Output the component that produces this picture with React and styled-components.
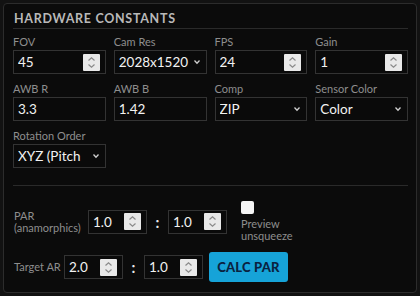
import React from 'react';
import styled, { createGlobalStyle } from 'styled-components';

const GlobalStyle = createGlobalStyle`
  html, body {
    margin: 0;
    padding: 0;
    background: #121212;
    font-family: Lato, "Open Sans", sans-serif;
  }
`;

const Panel = styled.div`
  box-sizing: border-box;
  margin: 3px;
  width: 414px;
  height: 290px;
  background: #0b0b0b;
  border: 1px solid #2c2c2c;
  border-radius: 4px;
  padding: 8px 8px 0 9px;
`;

const Heading = styled.div`
  font-size: 12.5px;
  line-height: 14px;
  font-weight: 700;
  letter-spacing: 0.7px;
  color: #b9b9b9;
  padding: 0 0 2px 1px;
  border-bottom: 1px solid #2a2a2a;
`;

const Grid = styled.div`
  display: grid;
  grid-template-columns: repeat(4, 1fr);
  column-gap: 8px;
  row-gap: 8px;
  margin-top: 6px;
`;

const Field = styled.div`
  display: flex;
  flex-direction: column;
  gap: 1px;
`;

const Label = styled.div`
  font-size: 11px;
  line-height: 14px;
  color: #8e8e8e;
  white-space: nowrap;
`;

const Box = styled.div`
  box-sizing: border-box;
  display: flex;
  align-items: center;
  height: 24px;
  width: ${p => (p.w ? `${p.w}px` : 'auto')};
  border: 1px solid #333;
  background: #0a0a0a;
  padding: 0 5px 0 4px;
  color: #f2f2f2;
  font-size: 13.5px;
`;

const Value = styled.span`
  flex: 1;
  white-space: nowrap;
  overflow: hidden;
`;

const Spin = styled.span`
  display: flex;
  align-items: center;
  justify-content: center;
  width: 17px;
  height: 17px;
  background: #e9e9e9;
  border-radius: 1px;
`;

const Divider = styled.div`
  height: 1px;
  background: #2a2a2a;
  margin-top: 17px;
`;

const Bottom = styled.div`
  display: flex;
  flex-direction: column;
  gap: 10px;
  margin-top: 15px;
`;

const Row = styled.div`
  display: flex;
  align-items: center;
`;

const RowLabel = styled.div`
  font-size: 11px;
  line-height: 12px;
  color: #8e8e8e;
  width: ${p => p.w}px;
  margin-left: 1px;
  white-space: nowrap;
`;

const Colon = styled.span`
  color: #e8e8e8;
  font-size: 15px;
  font-weight: 700;
  width: 21px;
  text-align: center;
`;

const CheckGroup = styled.div`
  display: flex;
  flex-direction: column;
  gap: 4px;
  margin-left: 14px;
`;

const Check = styled.span`
  width: 13px;
  height: 13px;
  background: #f4f4f4;
  border-radius: 2px;
`;

const CheckText = styled.div`
  font-size: 11px;
  line-height: 12px;
  color: #8e8e8e;
`;

const Button = styled.button`
  margin-left: 6px;
  width: 79px;
  height: 30px;
  border: none;
  border-radius: 3px;
  background: #16a3d8;
  color: #0a2240;
  font-family: inherit;
  font-size: 13px;
  font-weight: 900;
  letter-spacing: 0.2px;
  padding: 0;
`;

const SpinIcon = () => (
  <Spin>
    <svg width="9" height="13" viewBox="0 0 9 13" fill="none" stroke="#8a8a8a" strokeWidth="1.2">
      <path d="M1.5 4.5 L4.5 1.8 L7.5 4.5" />
      <path d="M1.5 8.5 L4.5 11.2 L7.5 8.5" />
    </svg>
  </Spin>
);

const Chevron = () => (
  <svg width="8" height="6" viewBox="0 0 8 6" fill="none" stroke="#cfcfcf" strokeWidth="1.3">
    <path d="M1.5 1.5 L4 4.2 L6.5 1.5" />
  </svg>
);

const NumberBox = ({ value, w }) => (
  <Box w={w}>
    <Value>{value}</Value>
    <SpinIcon />
  </Box>
);

const SelectBox = ({ value }) => (
  <Box>
    <Value>{value}</Value>
    <Chevron />
  </Box>
);

const TextBox = ({ value }) => (
  <Box>
    <Value>{value}</Value>
  </Box>
);

const fields = [
  { label: 'FOV', value: '45', kind: 'number' },
  { label: 'Cam Res', value: '2028x1520', kind: 'select' },
  { label: 'FPS', value: '24', kind: 'number' },
  { label: 'Gain', value: '1', kind: 'number' },
  { label: 'AWB R', value: '3.3', kind: 'text' },
  { label: 'AWB B', value: '1.42', kind: 'text' },
  { label: 'Comp', value: 'ZIP', kind: 'select' },
  { label: 'Sensor Color', value: 'Color', kind: 'select' },
  { label: 'Rotation Order', value: 'XYZ (Pitch', kind: 'select' },
];

const renderControl = f => {
  if (f.kind === 'number') return <NumberBox value={f.value} />;
  if (f.kind === 'select') return <SelectBox value={f.value} />;
  return <TextBox value={f.value} />;
};

export default function App() {
  return (
    <>
      <GlobalStyle />
      <Panel>
        <Heading>HARDWARE CONSTANTS</Heading>
        <Grid>
          {fields.map(f => (
            <Field key={f.label}>
              <Label>{f.label}</Label>
              {renderControl(f)}
            </Field>
          ))}
        </Grid>
        <Divider />
        <Bottom>
          <Row>
            <RowLabel w={74}>PAR<br />(anamorphics)</RowLabel>
            <NumberBox value="1.0" w={59} />
            <Colon>:</Colon>
            <NumberBox value="1.0" w={59} />
            <CheckGroup>
              <Check />
              <CheckText>Preview<br />unsqueeze</CheckText>
            </CheckGroup>
          </Row>
          <Row>
            <RowLabel w={50}>Target AR</RowLabel>
            <NumberBox value="2.0" w={59} />
            <Colon>:</Colon>
            <NumberBox value="1.0" w={59} />
            <Button>CALC PAR</Button>
          </Row>
        </Bottom>
      </Panel>
    </>
  );
}
